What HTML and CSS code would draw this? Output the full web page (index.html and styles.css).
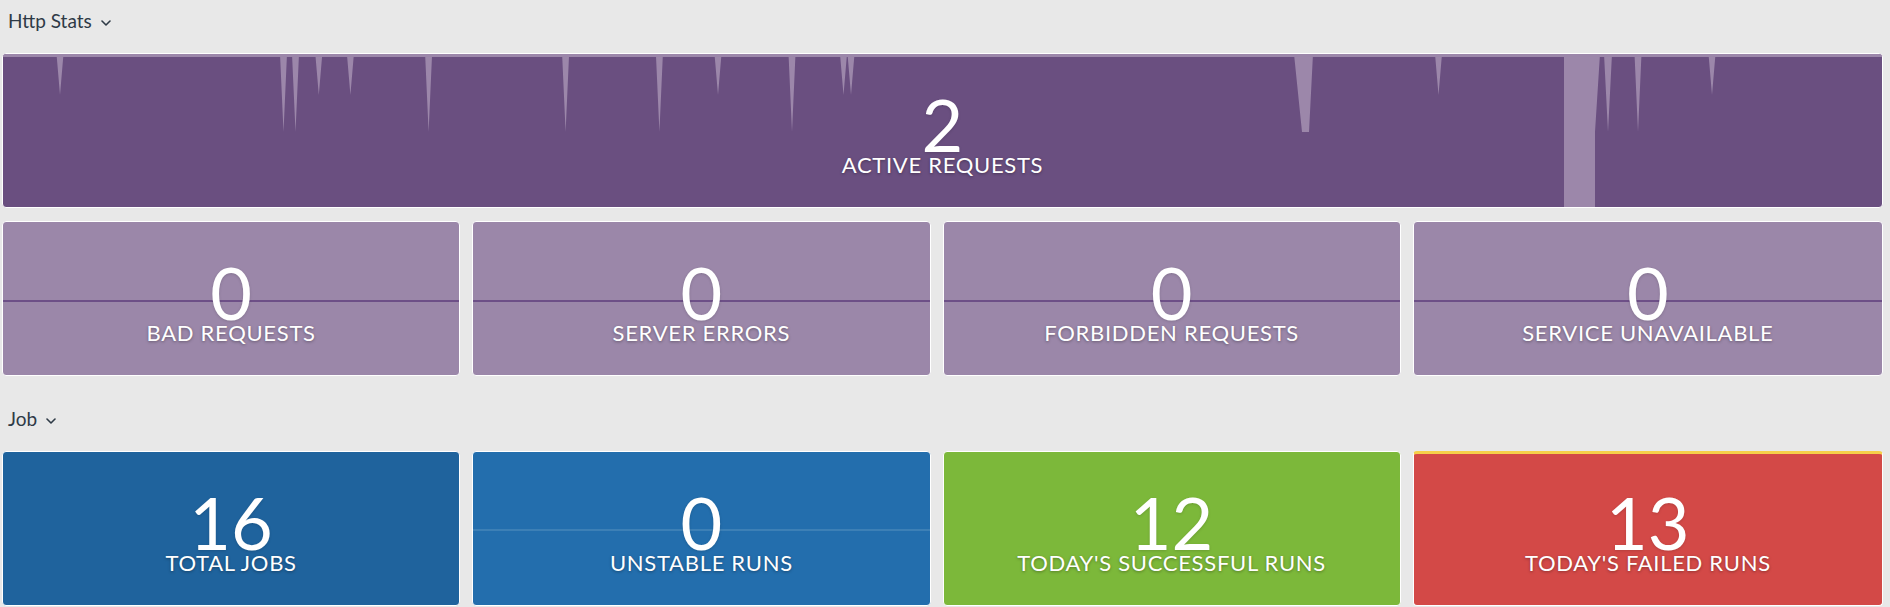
FILE: index.html
```html
<!DOCTYPE html>
<html lang="en">
<head>
<meta charset="utf-8">
<title>Dashboard</title>
<link rel="stylesheet" href="styles.css">
</head>
<body>
<div class="page">
  <section class="group">
    <h2 class="group-title">Http Stats<svg class="chev" viewBox="0 0 10 6" width="10" height="6"><path d="M1 1 L5 5 L9 1" /></svg></h2>
    <div class="tile tile-active">
      <svg class="spark" viewBox="0 0 1879 153" preserveAspectRatio="none">
        <path class="spark-fill" d="M0 0 H1879 V3 H0 Z
          M53.5 0 H60.5 L57 41 Z
          M277 0 H284 L280.5 78 Z
          M289 0 H296 L292.5 78 Z
          M312.3 0 H319.3 L315.8 41 Z
          M343.9 0 H350.9 L347.4 41 Z
          M422.1 0 H429.1 L425.6 78 Z
          M559.1 0 H566.1 L562.6 78 Z
          M652.9 0 H659.9 L656.4 78 Z
          M711.5 0 H718.5 L715 41 Z
          M785.5 0 H792.5 L789 78 Z
          M837 0 H844 L840.5 41 Z
          M844.5 0 H851.5 L848 41 Z
          M1291 0 H1310 L1306 78 H1299 Z
          M1432 0 H1439 L1435.5 41 Z
          M1561 0 H1597 L1592 78 V153 H1561 Z
          M1601 0 H1609 L1605 78 Z
          M1631.5 0 H1638.5 L1635 78 Z
          M1705.5 0 H1712.5 L1709 41 Z" />
      </svg>
      <div class="value">2</div>
      <div class="label">ACTIVE REQUESTS</div>
    </div>
    <div class="row">
      <div class="cell"><div class="tile tile-http"><div class="value">0</div><div class="label">BAD REQUESTS</div></div></div>
      <div class="cell"><div class="tile tile-http"><div class="value">0</div><div class="label">SERVER ERRORS</div></div></div>
      <div class="cell"><div class="tile tile-http"><div class="value">0</div><div class="label">FORBIDDEN REQUESTS</div></div></div>
      <div class="cell"><div class="tile tile-http"><div class="value">0</div><div class="label">SERVICE UNAVAILABLE</div></div></div>
    </div>
  </section>
  <section class="group group-job">
    <h2 class="group-title">Job<svg class="chev" viewBox="0 0 10 6" width="10" height="6"><path d="M1 1 L5 5 L9 1" /></svg></h2>
    <div class="row row-job">
      <div class="cell"><div class="tile tile-total"><div class="value">16</div><div class="label">TOTAL JOBS</div></div></div>
      <div class="cell"><div class="tile tile-unstable"><div class="value">0</div><div class="label">UNSTABLE RUNS</div></div></div>
      <div class="cell"><div class="tile tile-success"><div class="value">12</div><div class="label">TODAY'S SUCCESSFUL RUNS</div></div></div>
      <div class="cell"><div class="tile tile-failed"><div class="value">13</div><div class="label">TODAY'S FAILED RUNS</div></div></div>
    </div>
  </section>
</div>
</body>
</html>
```
FILE: styles.css
```css
html, body {
  margin: 0;
  padding: 0;
  background: #e8e8e8;
}

body {
  font-family: Lato, "Open Sans", "DejaVu Sans", sans-serif;
  overflow: hidden;
}

.page {
  width: 1881px;
  padding-left: 2px;
}

.group-title {
  display: block;
  margin: 0;
  height: 53px;
  box-sizing: border-box;
  padding: 11px 0 0 6px;
  font-size: 19px;
  line-height: 19px;
  font-weight: 400;
  color: #2e3a46;
}

.chev {
  display: inline-block;
  margin-left: 9px;
  vertical-align: 2px;
}

.chev path {
  fill: none;
  stroke: #2e3a46;
  stroke-width: 1.6;
  stroke-linecap: round;
  stroke-linejoin: round;
}

.tile {
  position: relative;
  box-sizing: border-box;
  height: 155px;
  border: 1px solid #fff;
  border-radius: 4px;
  display: flex;
  flex-direction: column;
  align-items: center;
  padding-top: 40px;
  color: #fff;
  overflow: hidden;
}

.value {
  position: relative;
  font-size: 72px;
  line-height: 60px;
  font-weight: 400;
  text-shadow: 0 1px 3px rgba(0, 0, 0, 0.15);
}

.label {
  position: relative;
  font-size: 22px;
  line-height: 22px;
  font-weight: 400;
  letter-spacing: 0.7px;
  text-shadow: 0 1px 3px rgba(0, 0, 0, 0.35);
  white-space: nowrap;
}

.tile-active {
  background: #6a4f80;
}

.spark {
  position: absolute;
  left: 0;
  top: 0;
  width: 100%;
  height: 100%;
}

.spark-fill {
  fill: #9c87aa;
}

.row {
  display: flex;
  margin-top: 13px;
}

.row-job {
  margin-top: 0;
}

.cell {
  flex: 0 0 25%;
  box-sizing: border-box;
  padding-right: 12px;
}

.cell:last-child {
  padding-right: 0;
}

.tile-http {
  background:
    linear-gradient(to bottom, transparent 78.5px, #6d4f87 78.5px, #6d4f87 80.5px, transparent 80.5px),
    #9b87a9;
}

.group-job {
  margin-top: 22px;
}

.tile-total {
  background: #1f639d;
}

.tile-unstable {
  background:
    linear-gradient(to bottom, transparent 77.5px, #3d80b6 77.5px, #3d80b6 79px, transparent 79px),
    #236ead;
}

.tile-success {
  background: #7cb83a;
}

.tile-failed {
  background: #d34947;
  border-top: 3px solid #f6cf4a;
  padding-top: 38px;
}
```
